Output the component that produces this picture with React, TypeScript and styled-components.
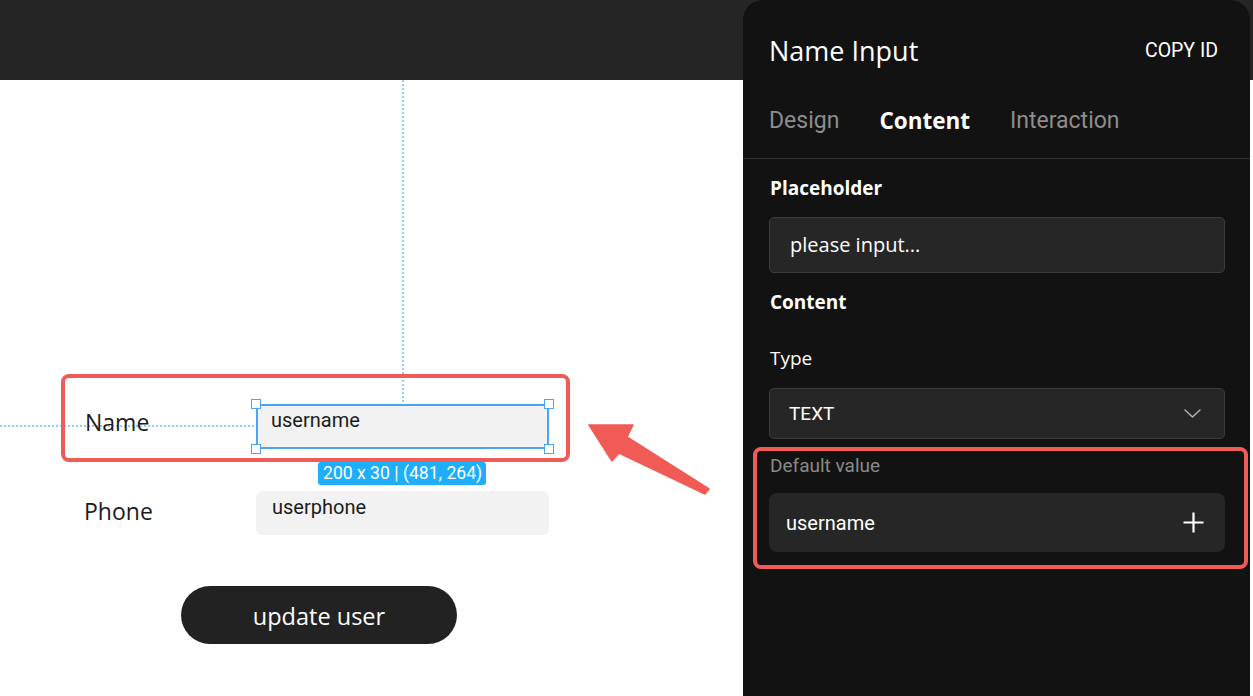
import React from "react";
import styled, { createGlobalStyle } from "styled-components";

const Global = createGlobalStyle`
  html, body { margin: 0; padding: 0; background: #ffffff; }
  body { width: 1253px; height: 696px; overflow: hidden; font-family: "Open Sans", "Noto Sans", sans-serif; }
  * { box-sizing: border-box; }
`;

const RED = "#f15b55";
const BLUE = "#4aa6ee";

const Page = styled.div`
  width: 1253px;
  height: 696px;
  display: grid;
  grid-template-columns: 743px 507px 3px;
  background: linear-gradient(#252525 0 80px, #ffffff 80px);
  overflow: hidden;
`;

const Workspace = styled.div`
  display: flex;
  flex-direction: column;
`;

const TopBar = styled.div`
  flex: none;
  height: 80px;
  background: #252525;
`;

const Canvas = styled.div`
  position: relative;
  flex: 1;
  background: #ffffff;
`;

const Guide = styled.div<{ $vertical?: boolean }>`
  position: absolute;
  ${(p) =>
    p.$vertical
      ? `left: 402px; top: 0; width: 2px; height: 324px;
         background: repeating-linear-gradient(to bottom, #92cdf7 0 2px, transparent 2px 4px);`
      : `left: 0; top: 345px; width: 257px; height: 2px;
         background: repeating-linear-gradient(to right, #92cdf7 0 2px, transparent 2px 4px);`}
`;

const Form = styled.div`
  position: relative;
  display: flex;
  flex-direction: column;
  padding: 324px 0 0 84px;
`;

const Row = styled.div<{ $gap?: number }>`
  position: relative;
  display: flex;
  align-items: flex-start;
  margin-top: ${(p) => p.$gap ?? 0}px;
`;

const FieldLabel = styled.div<{ $offset: number }>`
  width: 172px;
  margin-top: ${(p) => p.$offset}px;
  padding-left: ${(p) => (p.$offset > 4 ? 0 : 1)}px;
  font-size: 23px;
  line-height: 30px;
  color: #1b1b1b;
`;

const CanvasInput = styled.div<{ $selected?: boolean }>`
  position: relative;
  width: 293px;
  height: ${(p) => (p.$selected ? 45 : 44)}px;
  background: #f2f2f2;
  border: 2px solid ${(p) => (p.$selected ? BLUE : "transparent")};
  border-radius: ${(p) => (p.$selected ? 0 : 6)}px;
  padding: 2px 0 0 ${(p) => (p.$selected ? 13 : 14)}px;
  font-family: Roboto, sans-serif;
  font-size: 20px;
  line-height: 24px;
  color: #1c1c1c;
`;

const Handle = styled.span<{ $right?: boolean; $bottom?: boolean }>`
  position: absolute;
  width: 10px;
  height: 10px;
  background: #ffffff;
  border: 1px solid ${BLUE};
  ${(p) => (p.$right ? "right: -7px;" : "left: -7px;")}
  ${(p) => (p.$bottom ? "bottom: -7px;" : "top: -7px;")}
`;

const SizeTag = styled.div`
  position: absolute;
  left: 60px;
  top: calc(100% + 15px);
  height: 23px;
  padding: 0 4px 0 5px;
  background: #1eaefc;
  border-radius: 3px;
  color: #ffffff;
  font-family: Roboto, sans-serif;
  font-size: 17.6px;
  line-height: 23px;
  white-space: nowrap;
`;

const Highlight = styled.div<{ $top: number; $left: number; $width: number; $height: number }>`
  position: absolute;
  top: ${(p) => p.$top}px;
  left: ${(p) => p.$left}px;
  width: ${(p) => p.$width}px;
  height: ${(p) => p.$height}px;
  border: 4px solid ${RED};
  border-radius: 8px;
  pointer-events: none;
`;

const UpdateButton = styled.button`
  margin: 51px 0 0 97px;
  width: 276px;
  height: 58px;
  border: none;
  border-radius: 29px;
  background: #222222;
  color: #ffffff;
  font-family: "Open Sans", sans-serif;
  font-size: 23.5px;
  line-height: 30px;
  padding: 2px 0 0;
  cursor: pointer;
`;

const ArrowSvg = styled.svg`
  position: absolute;
  left: 585px;
  top: 340px;
  overflow: visible;
`;

const Panel = styled.aside`
  position: relative;
  display: flex;
  flex-direction: column;
  background: #121212;
  border-radius: 20px 20px 0 0;
  color: #ffffff;
`;

const PanelHeader = styled.div`
  height: 102px;
  display: flex;
  align-items: center;
  justify-content: space-between;
  padding: 0 32px 0 26px;
`;

const Title = styled.h1`
  margin: 0;
  font-family: "Open Sans", sans-serif;
  font-weight: 400;
  font-size: 27px;
  line-height: 36px;
  color: #ffffff;
`;

const CopyButton = styled.button`
  border: none;
  background: none;
  padding: 0;
  color: #ffffff;
  font-family: Roboto, sans-serif;
  font-weight: 400;
  font-size: 19.5px;
  line-height: 24px;
  cursor: pointer;
`;

const Tabs = styled.div`
  height: 57px;
  display: flex;
  align-items: flex-start;
  gap: 40px;
  padding: 4px 0 0 26px;
  border-bottom: 1px solid #303030;
`;

const Tab = styled.div<{ $active?: boolean }>`
  font-family: ${(p) => (p.$active ? `"Open Sans", sans-serif` : "Roboto, sans-serif")};
  font-weight: ${(p) => (p.$active ? 700 : 400)};
  font-size: ${(p) => (p.$active ? 22.5 : 23)}px;
  line-height: 30px;
  color: ${(p) => (p.$active ? "#ffffff" : "#8d8d8d")};
`;

const PanelBody = styled.div`
  display: flex;
  flex-direction: column;
  padding: 0 25px 0 26px;
`;

const SectionTitle = styled.div<{ $gap: number }>`
  margin-top: ${(p) => p.$gap}px;
  font-family: "Open Sans", sans-serif;
  font-weight: 700;
  font-size: 19px;
  line-height: 26px;
  padding-left: 1px;
`;

const SubLabel = styled.div<{ $muted?: boolean; $gap: number }>`
  margin-top: ${(p) => p.$gap}px;
  font-family: ${(p) => (p.$muted ? "Roboto, sans-serif" : `"Open Sans", sans-serif`)};
  font-size: 19px;
  line-height: ${(p) => (p.$muted ? 24 : 26)}px;
  color: ${(p) => (p.$muted ? "#8a8a8a" : "#ffffff")};
  padding-left: 1px;
`;

const Field = styled.div<{ $height: number; $gap: number; $bordered?: boolean; $font?: string; $size: number; $padLeft: number }>`
  margin-top: ${(p) => p.$gap}px;
  height: ${(p) => p.$height}px;
  display: flex;
  align-items: center;
  justify-content: space-between;
  padding: 0 ${(p) => (p.$bordered ? 23 : 21)}px 0 ${(p) => p.$padLeft}px;
  background: #262626;
  border: ${(p) => (p.$bordered ? "1px solid #3c3c3c" : "none")};
  border-radius: ${(p) => (p.$bordered ? 5 : 8)}px;
  font-family: ${(p) => p.$font ?? "Roboto, sans-serif"};
  font-size: ${(p) => p.$size}px;
  line-height: 26px;
  color: #ffffff;
`;

const DefaultGroup = styled.div`
  position: relative;
  display: flex;
  flex-direction: column;
`;

const Chevron = () => (
  <svg width="17" height="9" viewBox="0 0 17 9" fill="none">
    <path d="M1 1 L8.5 8 L16 1" stroke="#b5b5b5" strokeWidth="1.4" strokeLinecap="round" strokeLinejoin="round" />
  </svg>
);

const PlusIcon = () => (
  <svg width="21" height="21" viewBox="0 0 21 21" fill="none">
    <path d="M10.5 0.5 V20.5 M0.5 10.5 H20.5" stroke="#ffffff" strokeWidth="2.2" />
  </svg>
);

const Arrow = () => (
  <ArrowSvg width="130" height="80" viewBox="585 420 130 80">
    <polygon
      points="589,425 633,425 627,437 709,489 705,494 619,453 612,461"
      fill={RED}
      stroke={RED}
      strokeWidth="1.5"
      strokeLinejoin="round"
    />
  </ArrowSvg>
);

export default function App() {
  return (
    <>
      <Global />
      <Page>
        <Workspace>
          <TopBar />
          <Canvas>
            <Guide $vertical />
            <Guide />
            <Form>
              <Row>
                <FieldLabel $offset={3}>Name</FieldLabel>
                <CanvasInput $selected>
                  username
                  <Handle />
                  <Handle $right />
                  <Handle $bottom />
                  <Handle $right $bottom />
                  <SizeTag>200 x 30 | (481, 264)</SizeTag>
                </CanvasInput>
                <Highlight $top={-30} $left={-23} $width={509} $height={88} />
              </Row>
              <Row $gap={42}>
                <FieldLabel $offset={5}>Phone</FieldLabel>
                <CanvasInput>userphone</CanvasInput>
              </Row>
              <div>
                <UpdateButton>update user</UpdateButton>
              </div>
            </Form>
            <Arrow />
          </Canvas>
        </Workspace>
        <Panel>
          <PanelHeader>
            <Title>Name Input</Title>
            <CopyButton>COPY ID</CopyButton>
          </PanelHeader>
          <Tabs>
            <Tab>Design</Tab>
            <Tab $active>Content</Tab>
            <Tab>Interaction</Tab>
          </Tabs>
          <PanelBody>
            <SectionTitle $gap={16}>Placeholder</SectionTitle>
            <Field $gap={16} $height={56} $bordered $font={`"Open Sans", sans-serif`} $size={20} $padLeft={20}>
              please input...
            </Field>
            <SectionTitle $gap={16}>Content</SectionTitle>
            <SubLabel $gap={30}>Type</SubLabel>
            <Field $gap={17} $height={51} $bordered $size={19} $padLeft={19}>
              TEXT
              <Chevron />
            </Field>
            <DefaultGroup>
              <SubLabel $muted $gap={15}>Default value</SubLabel>
              <Field $gap={15} $height={59} $size={20} $padLeft={17}>
                username
                <PlusIcon />
              </Field>
              <Highlight $top={8} $left={-16} $width={495} $height={122} />
            </DefaultGroup>
          </PanelBody>
        </Panel>
        <div />
      </Page>
    </>
  );
}
